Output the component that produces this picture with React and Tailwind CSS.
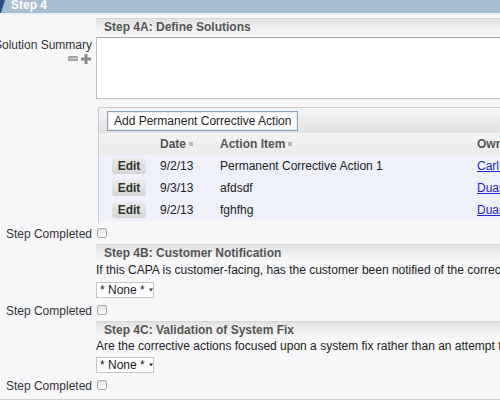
import React from 'react';

const headerBar =
  'h-[16px] flex items-center pl-[8px] font-bold text-[#555] leading-[14px] whitespace-nowrap border-t border-[#d6d6d6] bg-gradient-to-b from-[#e2e2e2] via-[#eeeeee] to-[#f5f5f5]';

const Checkbox = () => (
  <span className="inline-block w-[10px] h-[10px] border border-[#a8a8a8] rounded-[2px] bg-gradient-to-b from-[#e4e4e4] to-[#fbfbfb] -mt-[3px]" />
);

const StepCompleted = ({ className = '' }) => (
  <div className={`flex items-center h-[14px] ${className}`}>
    <div className="w-[92px] flex justify-end whitespace-nowrap text-[#333] leading-[14px]">Step Completed</div>
    <div className="ml-[5px] flex items-center">
      <Checkbox />
    </div>
  </div>
);

const NoneSelect = () => (
  <div className="w-[58px] h-[16px] border border-[#c4c4c4] bg-white flex items-center pl-[3px] gap-[4px] leading-[14px] text-[#222] whitespace-nowrap overflow-hidden">
    <span>* None *</span>
    <svg width="4" height="4" viewBox="0 0 4 4" className="shrink-0">
      <polygon points="0,0.5 4,0.5 2,3.5" fill="#333" />
    </svg>
  </div>
);

const SortMark = () => <span className="inline-block w-[4px] h-[4px] bg-[#b4bccf] ml-[3px] align-middle -mt-[2px]" />;

const rows = [
  { date: '9/2/13', item: 'Permanent Corrective Action 1', owner: 'Carl Anderson' },
  { date: '9/3/13', item: 'afdsdf', owner: 'Duane Whitfield' },
  { date: '9/2/13', item: 'fghfhg', owner: 'Duane Whitfield' },
];

export default function App() {
  return (
    <div className="w-[500px] h-[400px] overflow-hidden bg-[#f7f7fa] font-['Liberation_Sans',Arial,sans-serif] text-[12px] text-[#222]">
      {/* top title bar */}
      <div className="h-[13px] bg-[#a9bdd1] overflow-hidden flex">
        <svg width="6" height="13" viewBox="0 0 6 13" className="shrink-0">
          <polygon points="0,0 5,0 1,13 0,13" fill="#24508a" />
        </svg>
        <div className="ml-[5px] text-white font-bold leading-[10px]">Step 4</div>
      </div>
      <div className="h-[2px] bg-[#edf1f7]" />

      <div className="w-[760px]">
        {/* Step 4A */}
        <div className={`ml-[96px] mt-[3px] h-[17px] ${headerBar}`}>Step 4A: Define Solutions</div>

        <div className="flex mt-[2px]">
          <div className="w-[92px] flex flex-col items-end">
            <div className="flex justify-end whitespace-nowrap w-[92px] text-[#333] leading-[14px] mt-[1px]">Solution Summary</div>
            <div className="flex gap-[3px] mt-[2px] mr-[1px]">
              <svg width="10" height="9" viewBox="0 0 10 9">
                <rect x="0" y="2" width="10" height="5" rx="1.5" fill="#9a9a9a" />
                <rect x="1" y="3.5" width="8" height="2" fill="#c8c8c8" />
              </svg>
              <svg width="10" height="10" viewBox="0 0 10 10">
                <rect x="3.5" y="0" width="3" height="10" fill="#8a8a8a" />
                <rect x="0" y="3.5" width="10" height="3" fill="#8a8a8a" />
              </svg>
            </div>
          </div>
          <div className="ml-[4px] w-[660px] h-[62px] bg-white border border-[#c2c2c2] border-t-[#aaaaaa]" />
        </div>

        {/* actions panel */}
        <div className="ml-[98px] mt-[8px] w-[660px] border-l border-t border-[#cccccc] pb-[2px]">
          <div className="h-[25px] flex items-center pl-[8px] bg-gradient-to-b from-[#f4f4f4] via-[#ececec] to-[#e2e2e2]">
            <button className="h-[20px] px-[6px] bg-white border border-[#8aa2bd] shadow-[inset_0_0_0_1px_#e6edf5] text-[#222] leading-[16px] whitespace-nowrap">
              Add Permanent Corrective Action
            </button>
          </div>
          <div className="grid grid-cols-[57px_60px_257px_1fr] h-[22px] items-center font-bold text-[#555] bg-gradient-to-b from-[#f3f3f3] to-[#ebebeb] whitespace-nowrap">
            <div />
            <div className="pl-[4px]">Date<SortMark /></div>
            <div className="pl-[4px]">Action Item<SortMark /></div>
            <div className="pl-[4px]">Owner</div>
          </div>
          {rows.map((r, i) => (
            <div key={i} className="grid grid-cols-[57px_60px_257px_1fr] h-[22px] items-center bg-[#eef0fa] whitespace-nowrap">
              <div className="pl-[13px]">
                <span className="flex items-center justify-center w-[34px] h-[16px] rounded-[3px] bg-gradient-to-b from-[#ebebeb] to-[#d6d6d6] font-bold text-[#333] leading-[14px]">
                  Edit
                </span>
              </div>
              <div className="pl-[4px]">{r.date}</div>
              <div className="pl-[4px]">{r.item}</div>
              <div className="pl-[4px]">
                <a href="#" className="text-[#2323c8] underline">{r.owner}</a>
              </div>
            </div>
          ))}
        </div>

        <StepCompleted className="mt-[4px]" />

        {/* Step 4B */}
        <div className={`ml-[96px] mt-[3px] ${headerBar}`}>Step 4B: Customer Notification</div>
        <div className="ml-[96px] mt-[3px] h-[14px] leading-[14px] whitespace-nowrap">
          If this CAPA is customer-facing, has the customer been notified of the corrective actions being taken?
        </div>
        <div className="ml-[96px] mt-[5px]">
          <NoneSelect />
        </div>
        <StepCompleted className="mt-[6px]" />

        {/* Step 4C */}
        <div className={`ml-[96px] mt-[3px] ${headerBar}`}>Step 4C: Validation of System Fix</div>
        <div className="ml-[96px] mt-[2px] h-[14px] leading-[14px] whitespace-nowrap">
          Are the corrective actions focused upon a system fix rather than an attempt to fix a single occurrence?
        </div>
        <div className="ml-[96px] mt-[4px]">
          <NoneSelect />
        </div>
        <StepCompleted className="mt-[6px]" />

        <div className="mt-[6px] h-px bg-[#cfcfcf]" />
      </div>
    </div>
  );
}
